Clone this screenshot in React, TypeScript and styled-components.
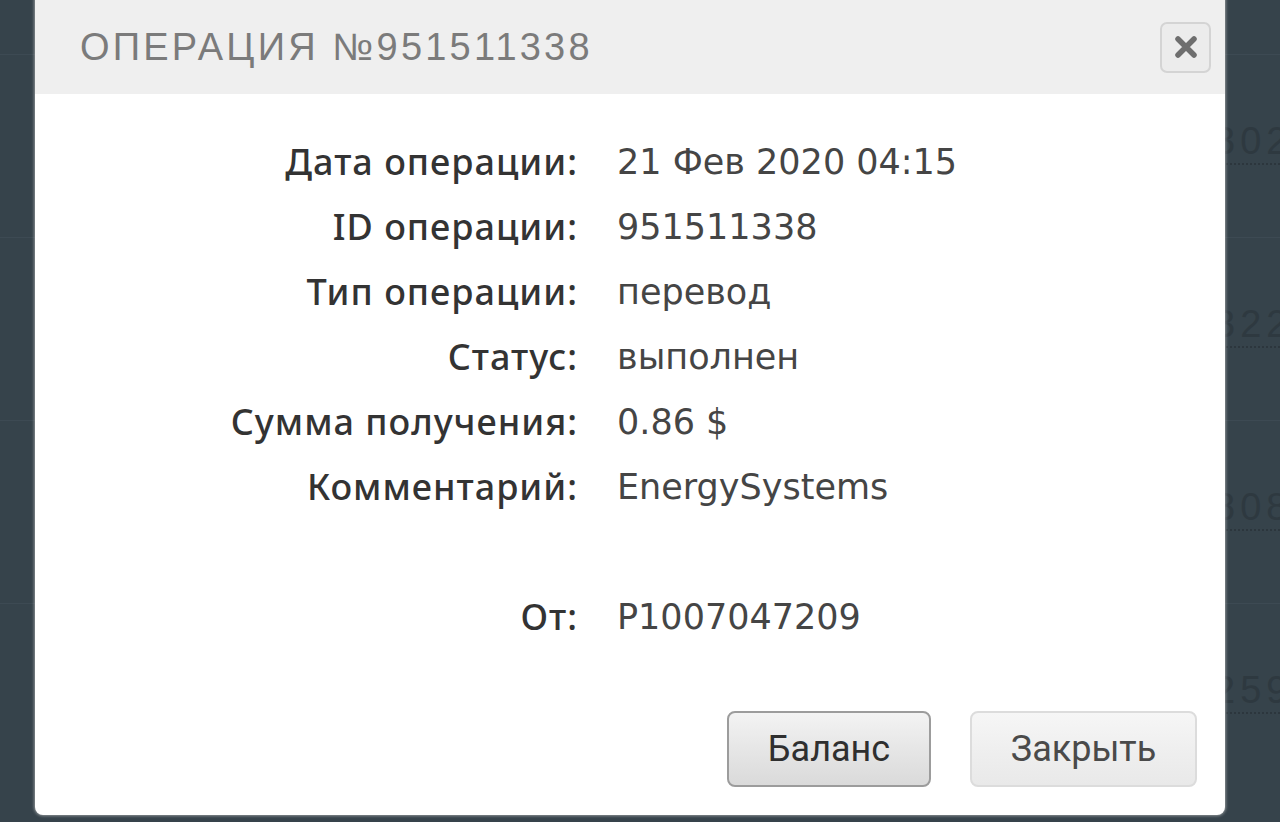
import React from 'react';
import styled, { createGlobalStyle } from 'styled-components';

const GlobalStyle = createGlobalStyle`
    html, body {
        margin: 0;
        padding: 0;
        width: 100%;
        height: 100%;
        overflow: hidden;
        background: #36434b;
    }
`

const Page = styled.div`
    position: relative;
    width: 1280px;
    height: 822px;
    overflow: hidden;
    background: #36434b;
`

const Backdrop = styled.div`
    display: flex;
    flex-direction: column;
    padding-top: 54px;
`

const BackRow = styled.div`
    height: 183px;
    border-top: 1px solid #3d4a53;
    display: flex;
    flex-direction: column;
    align-items: flex-start;
    padding-left: 1214px;
    padding-top: 64px;
    box-sizing: border-box;
`

const BackValue = styled.span`
    font-family: "Liberation Sans", Arial, sans-serif;
    font-size: 38px;
    letter-spacing: 5px;
    color: #2e3940;
    white-space: nowrap;
    line-height: 44px;
    border-bottom: 2px dotted #2c363d;
`

const Modal = styled.div`
    position: absolute;
    left: 35px;
    top: -10px;
    width: 1190px;
    height: 825px;
    background: #ffffff;
    border-radius: 8px;
    box-shadow: 0 0 3px 1px rgba(200, 200, 200, 0.6);
    display: flex;
    flex-direction: column;
    overflow: hidden;
`

const Header = styled.div`
    height: 104px;
    padding-top: 10px;
    box-sizing: border-box;
    background: #efefef;
    display: flex;
    align-items: center;
    justify-content: space-between;
    padding-left: 45px;
    padding-right: 14px;
`

const Title = styled.h1`
    margin: 0;
    font-family: "Liberation Sans", Arial, sans-serif;
    font-weight: 400;
    font-size: 38px;
    letter-spacing: 3.2px;
    color: #7b7b7b;
`

const CloseButton = styled.button`
    width: 51px;
    height: 51px;
    border: 2px solid #d4d4d4;
    border-radius: 7px;
    background: #ececec;
    display: flex;
    align-items: center;
    justify-content: center;
    padding: 0;
`

const Body = styled.div`
    flex: 1;
    display: flex;
    flex-direction: column;
    padding: 35px 28px 28px 0;
`

const Details = styled.div`
    display: grid;
    grid-template-columns: 543px 1fr;
    column-gap: 39px;
    grid-auto-rows: 65px;
    align-items: center;
`

const Label = styled.div`
    text-align: right;
    font-family: "Noto Sans", sans-serif;
    font-weight: 500;
    font-size: 36px;
    letter-spacing: 1px;
    color: #333333;
    white-space: nowrap;
`

const Value = styled.div`
    font-family: "DejaVu Sans", "Noto Sans", sans-serif;
    font-weight: 400;
    font-size: 35px;
    color: #454545;
    white-space: nowrap;
`

const Spacer = styled.div`
    grid-column: 1 / 3;
`

const Actions = styled.div`
    margin-top: auto;
    display: flex;
    justify-content: flex-end;
    gap: 39px;
`

const ActionButton = styled.button<{ $primary?: boolean }>`
    height: 76px;
    width: ${p => (p.$primary ? '204px' : '227px')};
    border-radius: 8px;
    font-family: Roboto, "Noto Sans", sans-serif;
    font-size: 36px;
    color: ${p => (p.$primary ? '#2f2f2f' : '#4a4a4a')};
    border: ${p => (p.$primary ? '2px solid #9c9c9c' : '2px solid #dcdcdc')};
    background: ${p => (p.$primary
        ? 'linear-gradient(#f3f3f3, #e6e6e6 50%, #dadada)'
        : 'linear-gradient(#f6f6f6, #efefef 50%, #e9e9e9)')};
`

const rows: [string, string][] = [
    ['Дата операции:', '21 Фев 2020 04:15'],
    ['ID операции:', '951511338'],
    ['Тип операции:', 'перевод'],
    ['Статус:', 'выполнен'],
    ['Сумма получения:', '0.86 $'],
    ['Комментарий:', 'EnergySystems'],
]

const backValues = ['302', '322', '808', '259']

const App = () => {
    return (
        <Page>
            <GlobalStyle />
            <Backdrop>
                {backValues.map(v => (
                    <BackRow key={v}>
                        <BackValue>{v}</BackValue>
                    </BackRow>
                ))}
            </Backdrop>
            <Modal>
                <Header>
                    <Title>ОПЕРАЦИЯ №951511338</Title>
                    <CloseButton>
                        <svg width="24" height="24" viewBox="0 0 24 24">
                            <path d="M4 4 L20 20 M20 4 L4 20" stroke="#6e6e6e" strokeWidth="5.5" strokeLinecap="round" />
                        </svg>
                    </CloseButton>
                </Header>
                <Body>
                    <Details>
                        {rows.map(([l, v]) => (
                            <React.Fragment key={l}>
                                <Label>{l}</Label>
                                <Value>{v}</Value>
                            </React.Fragment>
                        ))}
                        <Spacer />
                        <Label>От:</Label>
                        <Value>P1007047209</Value>
                    </Details>
                    <Actions>
                        <ActionButton $primary>Баланс</ActionButton>
                        <ActionButton>Закрыть</ActionButton>
                    </Actions>
                </Body>
            </Modal>
        </Page>
    )
}

export default App;
